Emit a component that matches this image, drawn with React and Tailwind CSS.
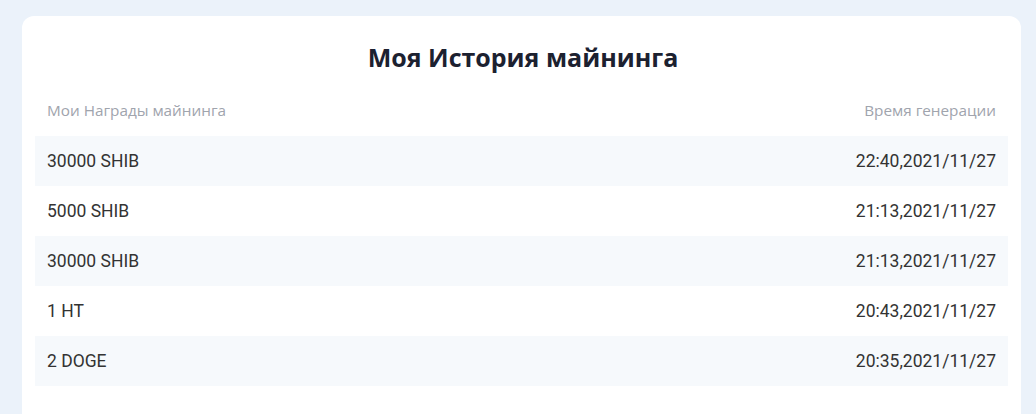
export default function App() {
  const rows = [
    ["30000 SHIB", "22:40,2021/11/27"],
    ["5000 SHIB", "21:13,2021/11/27"],
    ["30000 SHIB", "21:13,2021/11/27"],
    ["1 HT", "20:43,2021/11/27"],
    ["2 DOGE", "20:35,2021/11/27"],
  ];
  return (
    <div className="w-[1036px] h-[414px] overflow-hidden bg-[#ebf2fa] pt-[16px] pl-[22px] pr-[15px]">
      <div className="bg-white rounded-t-[12px] h-[420px] px-[13px]">
        <h1 className="text-center pt-[25px] pl-[3px] h-[68px] text-[25px] leading-[32px] font-bold text-[#1c2130] font-['Open_Sans',sans-serif]">
          Моя История майнинга
        </h1>
        <div className="flex justify-between items-center h-[52px] px-[12px] text-[15.3px] text-[#a0a4ad] font-['Open_Sans',sans-serif]">
          <span>Мои Награды майнинга</span>
          <span>Время генерации</span>
        </div>
        <div className="font-['Roboto',sans-serif] text-[17.5px] text-[#333333]">
          {rows.map(([a, b], i) => (
            <div
              key={i}
              className={
                "flex justify-between items-center h-[50px] px-[12px] " +
                (i % 2 === 0 ? "bg-[#f6f9fc]" : "bg-white")
              }
            >
              <span>{a}</span>
              <span>{b}</span>
            </div>
          ))}
        </div>
      </div>
    </div>
  );
}
